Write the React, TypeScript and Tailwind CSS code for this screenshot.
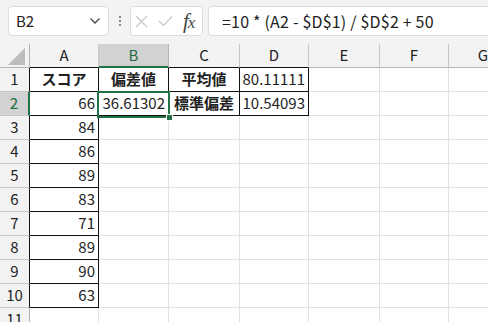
import React from "react";

const cols = ["A", "B", "C", "D", "E", "F", "G"];
type Cell = { t: string; bold?: boolean; align: "l" | "c" | "r" };
const data: Record<string, Cell> = {
  A1: { t: "スコア", bold: true, align: "c" },
  B1: { t: "偏差値", bold: true, align: "c" },
  C1: { t: "平均値", bold: true, align: "c" },
  D1: { t: "80.11111", align: "r" },
  A2: { t: "66", align: "r" },
  B2: { t: "36.61302", align: "r" },
  C2: { t: "標準偏差", bold: true, align: "c" },
  D2: { t: "10.54093", align: "r" },
  A3: { t: "84", align: "r" },
  A4: { t: "86", align: "r" },
  A5: { t: "89", align: "r" },
  A6: { t: "83", align: "r" },
  A7: { t: "71", align: "r" },
  A8: { t: "89", align: "r" },
  A9: { t: "90", align: "r" },
  A10: { t: "63", align: "r" },
};

const bordered = (r: number, c: number) => {
  if (c === 1 && r >= 1 && r <= 10) return true;
  if (c >= 2 && c <= 4 && r >= 1 && r <= 2) return true;
  return false;
};

const font = { fontFamily: '"Noto Sans CJK JP", "Noto Sans", sans-serif' };

export default function App() {
  const rows = Array.from({ length: 11 }, (_, i) => i + 1);
  return (
    <div className="w-[488px] h-[322px] overflow-hidden bg-white text-[#222]" style={font}>
      {/* Toolbar */}
      <div className="h-[44px] bg-[#f3f3f3] flex items-start pt-[6px] pl-[8px] gap-0">
        <div className="w-[101px] h-[30px] bg-white border border-[#dcdcdc] rounded-[4px] flex items-center pl-[7px] pr-[7px] justify-between">
          <span className="text-[15px] text-[#222]">B2</span>
          <svg width="12" height="8" viewBox="0 0 12 8">
            <path d="M1.5 1.5 L6 6 L10.5 1.5" fill="none" stroke="#444" strokeWidth="1.3" />
          </svg>
        </div>
        <div className="w-[21px] h-[30px] flex flex-col items-center justify-center gap-[2px]">
          <div className="w-[2px] h-[2px] bg-[#8a8a8a]" />
          <div className="w-[2px] h-[2px] bg-[#8a8a8a]" />
          <div className="w-[2px] h-[2px] bg-[#8a8a8a]" />
        </div>
        <div className="w-[73px] h-[30px] bg-white border border-[#dcdcdc] rounded-[4px] flex items-center pl-[4px] gap-[10px]">
          <svg width="13" height="13" viewBox="0 0 13 13">
            <path d="M1 1 L12 12 M12 1 L1 12" stroke="#c8c8c8" strokeWidth="1.2" fill="none" />
          </svg>
          <svg width="15" height="12" viewBox="0 0 15 12">
            <path d="M1 6 L5.5 10.5 L14 1.5" stroke="#c8c8c8" strokeWidth="1.2" fill="none" />
          </svg>
          <span className="text-[21px] italic text-[#444] leading-none tracking-[-1px]" style={{ fontFamily: '"Liberation Serif", serif' }}>
            <span>f</span>
            <span className="text-[17px]">x</span>
          </span>
        </div>
        <div className="ml-[5px] flex-1 h-[30px] bg-white border border-[#dcdcdc] border-r-0 rounded-l-[4px] flex items-center pl-[13px]">
          <span className="text-[16px] tracking-[0.2px] text-[#222] whitespace-pre">=10 * (A2 - $D$1) / $D$2 + 50</span>
        </div>
      </div>

      {/* Grid */}
      <div className="relative">
        <div className="grid grid-cols-[30px_69px_70px_71px_69px_71px_69px_69px] w-[518px]">
          {/* header row */}
          <div className="h-[24px] bg-[#f3f3f3] border-r border-r-[#b4b4b4] border-b border-b-[#b4b4b4] relative">
            <svg width="18" height="18" viewBox="0 0 18 18" className="absolute left-[8px] top-[4px]">
              <path d="M0 17 L17 0 L17 17 Z" fill="#bdbdbd" />
            </svg>
          </div>
          {cols.map((c, i) => {
            const sel = c === "B";
            const black = i + 1 <= 4;
            return (
              <div
                key={c}
                className={
                  "h-[24px] flex items-center justify-center text-[15px] border-r " +
                  (sel
                    ? "bg-[#d2d2d2] text-[#1e6b40] border-r-[#b4b4b4] border-b-2 border-b-[#217346]"
                    : "bg-[#f3f3f3] text-[#222] border-r-[#c6c6c6] border-b " +
                      (black ? "border-b-[#111]" : "border-b-[#b4b4b4]"))
                }
              >
                {c}
              </div>
            );
          })}
          {rows.map((r) => (
            <React.Fragment key={r}>
              <div
                className={
                  "h-[24px] flex items-center justify-center text-[15px] border-b border-b-[#c6c6c6] " +
                  (r === 2
                    ? "bg-[#d2d2d2] text-[#1e6b40] border-r-2 border-r-[#217346]"
                    : "bg-[#f3f3f3] text-[#222] border-r " + (r <= 10 ? "border-r-[#111]" : "border-r-[#b4b4b4]"))
                }
              >
                {r}
              </div>
              {cols.map((c, ci) => {
                const col = ci + 1;
                const cell = data[c + r];
                const rb = bordered(r, col) || bordered(r, col + 1);
                const bb = bordered(r, col) || bordered(r + 1, col);
                const align = cell
                  ? cell.align === "r"
                    ? "justify-end pr-[3px]"
                    : cell.align === "c"
                    ? "justify-center"
                    : "justify-start pl-[3px]"
                  : "";
                return (
                  <div
                    key={c}
                    className={
                      "h-[24px] flex items-center text-[15px] overflow-visible whitespace-nowrap border-r border-b " +
                      (rb ? "border-r-[#111] " : "border-r-[#e1e1e1] ") +
                      (bb ? "border-b-[#111] " : "border-b-[#e1e1e1] ") +
                      align
                    }
                  >
                    {cell ? <span className={cell.bold ? "font-bold" : ""}>{cell.t}</span> : null}
                  </div>
                );
              })}
            </React.Fragment>
          ))}
        </div>
        {/* active cell selection */}
        <div className="absolute left-[97px] top-[47px] w-[73px] h-[27px] border-2 border-[#217346] pointer-events-none" />
        <div className="absolute left-[166px] top-[70px] w-[7px] h-[7px] bg-[#217346] border border-white" />
      </div>
    </div>
  );
}
